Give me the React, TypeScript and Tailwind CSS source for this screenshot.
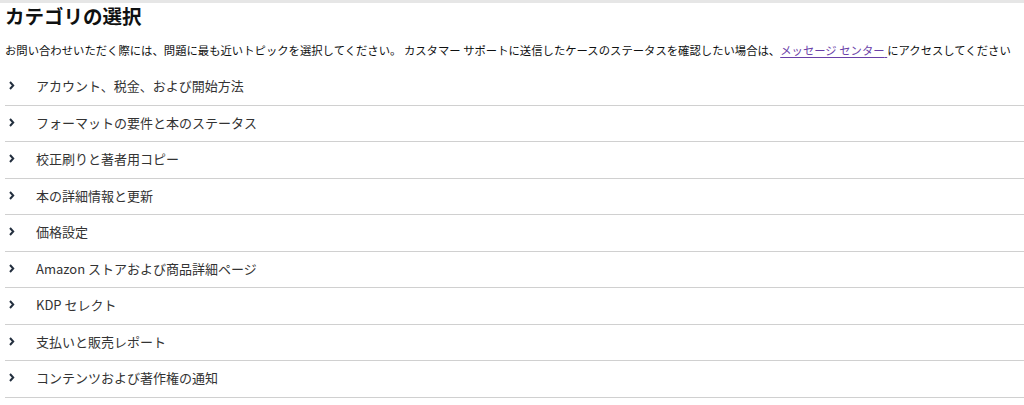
const categories: string[] = [
  "アカウント、税金、および開始方法",
  "フォーマットの要件と本のステータス",
  "校正刷りと著者用コピー",
  "本の詳細情報と更新",
  "価格設定",
  "Amazon ストアおよび商品詳細ページ",
  "KDP セレクト",
  "支払いと販売レポート",
  "コンテンツおよび著作権の通知",
];

function Chevron() {
  return (
    <svg width="6" height="9" viewBox="0 0 6 9" className="text-[#232f3e]">
      <path d="M1 1l3.2 3.5L1 8" fill="none" stroke="currentColor" strokeWidth="2" />
    </svg>
  );
}

export default function App() {
  return (
    <div
      className="min-h-screen bg-white border-t-[3px] border-[#e6e6e6] pl-[5px]"
      style={{ fontFamily: '"Noto Sans CJK JP", "Noto Sans", Arial, sans-serif' }}
    >
      <h1 className="text-[19.5px] leading-[24px] font-bold text-[#0f1111] pt-[1px]">カテゴリの選択</h1>
      <p className="mt-[14px] text-[11.35px] leading-[16px] text-[#0f1111] whitespace-nowrap">
        お問い合わせいただく際には、問題に最も近いトピックを選択してください。 カスタマー サポートに送信したケースのステータスを確認したい場合は、
        <a href="#" className="text-[#6a40a8] underline underline-offset-2">
          メッセージ センター{" "}
        </a>
        にアクセスしてください
      </p>
      <ul className="mt-[11px]">
        {categories.map((c) => (
          <li
            key={c}
            className="h-[36.5px] border-b border-[#d0d0d0] flex items-center pb-[2px]"
          >
            <span className="w-[31px] pl-[4px] flex items-center">
              <Chevron />
            </span>
            <span className="text-[13px] text-[#333]">{c}</span>
          </li>
        ))}
      </ul>
    </div>
  );
}
